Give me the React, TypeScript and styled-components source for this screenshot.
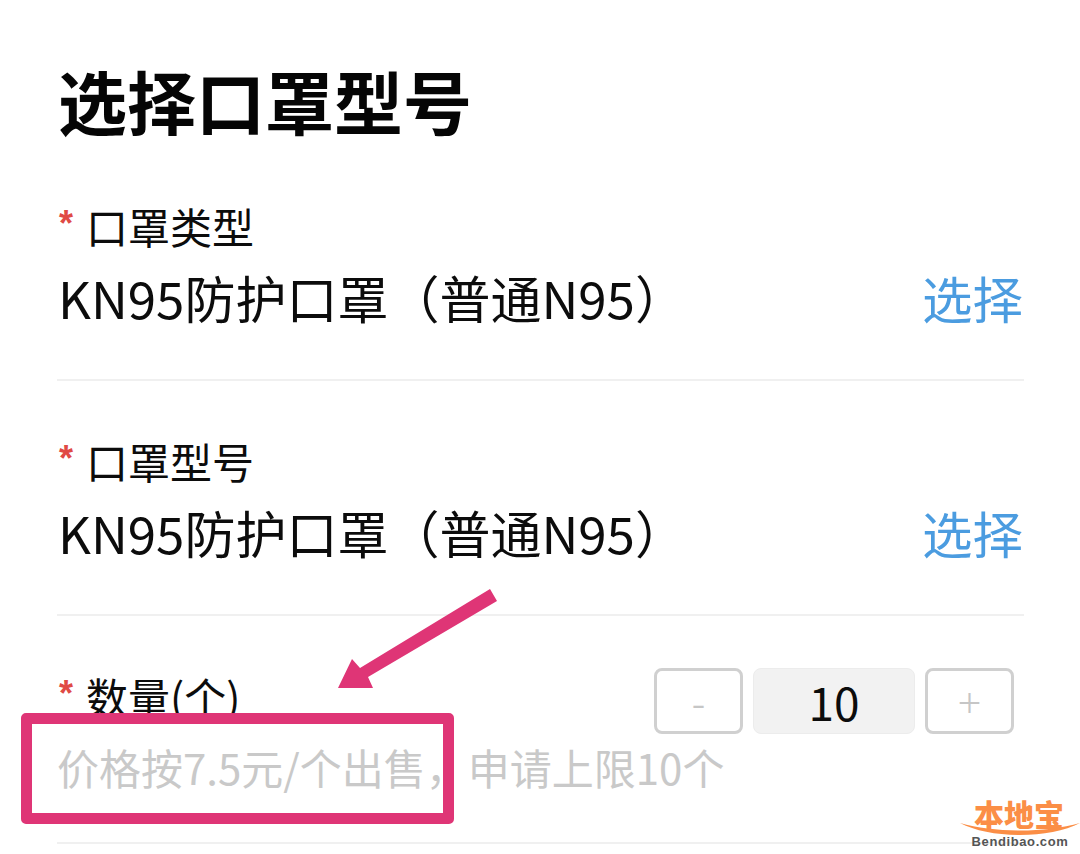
import React from "react";
import styled, { createGlobalStyle } from "styled-components";

const Global = createGlobalStyle`
  html, body { margin: 0; padding: 0; background: #fff; }
  body { font-family: "Noto Sans CJK SC", "Noto Sans", sans-serif; color: #0c0c0c; }
`;
const Page = styled.div`
  position: relative; width: 1080px; height: 854px; overflow: hidden;
  box-sizing: border-box; padding: 0 56px 0 57px; background: #fff;
`;
const Title = styled.h1`
  margin: 0; height: 146px; padding: 52px 0 0 1px; box-sizing: border-box;
  font-size: 69px; line-height: 96px; font-weight: 700; color: #050505;
`;
const Field = styled.section<{ $h: number }>`
  height: ${p => p.$h}px; box-sizing: border-box; border-bottom: 2px solid #f0f0f0;
  padding-top: 56px; position: relative;
`;
const Label = styled.div`
  display: flex; align-items: flex-start; height: 48px; font-size: 42px; line-height: 48px; padding-left: 2px;
`;
const CountLabel = styled(Label)`margin-top: 4px;`;
const Star = styled.span`
  width: 27px; flex: none; color: #e04a45; font-size: 36px; line-height: 44px; font-weight: 700; font-family: "Liberation Sans", sans-serif;
`;
const ValueRow = styled.div`
  display: flex; justify-content: space-between; align-items: center; height: 70px; margin-top: 12px;
  font-size: 51px; line-height: 70px; padding-left: 1px; padding-right: 1px;
`;
const Pick = styled.span`color: #4b9ce0; font-size: 50.5px;`;
const CountRow = styled.div`
  display: flex; justify-content: space-between; align-items: flex-start; margin-top: -4px;
`;
const Stepper = styled.div`display: flex; gap: 10px; margin-right: 10px;`;
const StepBtn = styled.div`
  width: 89px; height: 66px; box-sizing: border-box; border: 3px solid #d0d0d0; border-radius: 8px;
  display: flex; align-items: center; justify-content: center; color: #c6c6c6; font-size: 42px; font-weight: 300;
  font-family: "Noto Sans", sans-serif;
`;
const StepValue = styled.div`
  width: 162px; height: 66px; border-radius: 8px; background: #f2f2f2; border: 1px solid #ececec; box-sizing: border-box;
  display: flex; align-items: center; justify-content: center; font-size: 46px; color: #0c0c0c;
`;
const Hint = styled.div`
  font-size: 42px; line-height: 60px; color: #c9c9c9; margin-top: 3px; white-space: nowrap;
`;
const Highlight = styled.div`
  position: absolute; left: 21px; top: 713px; width: 433px; height: 111px; box-sizing: border-box;
  border: 11px solid #df3576; border-radius: 5px;
`;
const Overlay = styled.svg`position: absolute; left: 0; top: 0;`;
const Logo = styled.div`
  position: absolute; left: 959px; top: 796px; width: 120px; height: 58px; text-align: center;
`;
const LogoMark = styled.div`
  font-size: 30px; line-height: 34px; font-weight: 900; color: #fb8e46;
`;
const Swoosh = styled.svg`position: absolute; left: 1px; top: 27px;`;
const LogoUrl = styled.div`
  position: absolute; left: 1px; right: -1px; top: 38px; font-family: "Liberation Sans", sans-serif;
  font-weight: 700; font-size: 13px; line-height: 15px; letter-spacing: 0.6px; color: #555;
`;

export default function App() {
  return (
    <Page>
      <Global />
      <Title>选择口罩型号</Title>
      <Field $h={235}>
        <Label><Star>*</Star>口罩类型</Label>
        <ValueRow>KN95防护口罩（普通N95）<Pick>选择</Pick></ValueRow>
      </Field>
      <Field $h={235}>
        <Label><Star>*</Star>口罩型号</Label>
        <ValueRow>KN95防护口罩（普通N95）<Pick>选择</Pick></ValueRow>
      </Field>
      <Field $h={228}>
        <CountRow>
          <CountLabel><Star>*</Star>数量(个)</CountLabel>
          <Stepper>
            <StepBtn>-</StepBtn>
            <StepValue>10</StepValue>
            <StepBtn>+</StepBtn>
          </Stepper>
        </CountRow>
        <Hint>价格按7.5元/个出售，申请上限10个</Hint>
      </Field>
      <Highlight />
      <Overlay width="1080" height="854" viewBox="0 0 1080 854">
        <path d="M490 589 L497 601 L368 677 L373 688 L338 688 L352 659 L360 668 Z" fill="#df3576" />
      </Overlay>
      <Logo>
        <LogoMark>本地宝</LogoMark>
        <Swoosh width="120" height="14" viewBox="0 0 120 14">
          <path d="M0 0 C35 10 85 10 120 0 C90 16 30 16 0 0 Z" fill="#fb8e46" />
        </Swoosh>
        <LogoUrl>Bendibao.com</LogoUrl>
      </Logo>
    </Page>
  );
}
